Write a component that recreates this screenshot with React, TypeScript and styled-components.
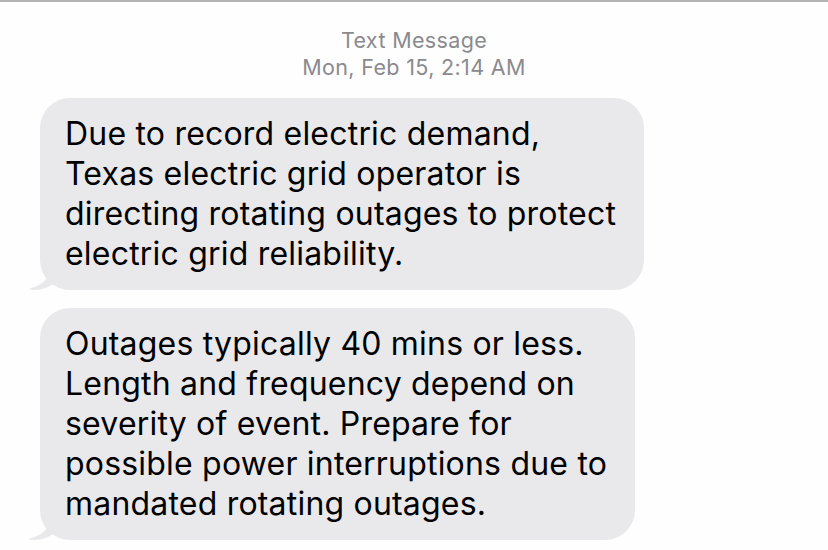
import React from "react";
import styled, { createGlobalStyle } from "styled-components";

const Global = createGlobalStyle`
  html, body { margin: 0; padding: 0; background: #fefefe; }
  body { font-family: Inter, "Noto Sans", "Liberation Sans", sans-serif; }
`;

const Screen = styled.div`
  width: 828px;
  height: 550px;
  box-sizing: border-box;
  border-top: 2px solid #b4b4b4;
  overflow: hidden;
  display: flex;
  flex-direction: column;
`;

const Header = styled.div`
  margin-top: 25px;
  display: flex;
  flex-direction: column;
  align-items: center;
  color: #8a8a8e;
  font-size: 21.5px;
  line-height: 27px;
  letter-spacing: 0.35px;
`;

const Thread = styled.div`
  margin-top: 17px;
  padding-left: 40px;
  display: flex;
  flex-direction: column;
  align-items: flex-start;
  gap: 18px;
`;

const Bubble = styled.div`
  position: relative;
  background: #e9e9eb;
  border-radius: 30px;
  padding: 16px 28px 16px 25px;
  color: #000;
  font-size: 32px;
  line-height: 40px;
  letter-spacing: 0.2px;
  white-space: nowrap;
`;

const Tail = styled.svg`
  position: absolute;
  left: -12px;
  bottom: 0;
  width: 30px;
  height: 24px;
`;

const BubbleTail = () => (
  <Tail viewBox="0 0 30 24">
    <path d="M22 0 C22 10 18 18 2 22.5 C1 23 1 23.6 3 23.8 C12 24.5 20 22 26 17 L30 14 L30 0 Z" fill="#e9e9eb" />
  </Tail>
);

const Message = ({ lines }: { lines: string[] }) => (
  <Bubble>
    {lines.map((l, i) => (
      <div key={i}>{l}</div>
    ))}
    <BubbleTail />
  </Bubble>
);

export default function App() {
  return (
    <>
      <Global />
      <Screen>
        <Header>
          <div>Text Message</div>
          <div>Mon, Feb 15, 2:14 AM</div>
        </Header>
        <Thread>
          <Message
            lines={[
              "Due to record electric demand,",
              "Texas electric grid operator is",
              "directing rotating outages to protect",
              "electric grid reliability.",
            ]}
          />
          <Message
            lines={[
              "Outages typically 40 mins or less.",
              "Length and frequency depend on",
              "severity of event. Prepare for",
              "possible power interruptions due to",
              "mandated rotating outages.",
            ]}
          />
        </Thread>
      </Screen>
    </>
  );
}
